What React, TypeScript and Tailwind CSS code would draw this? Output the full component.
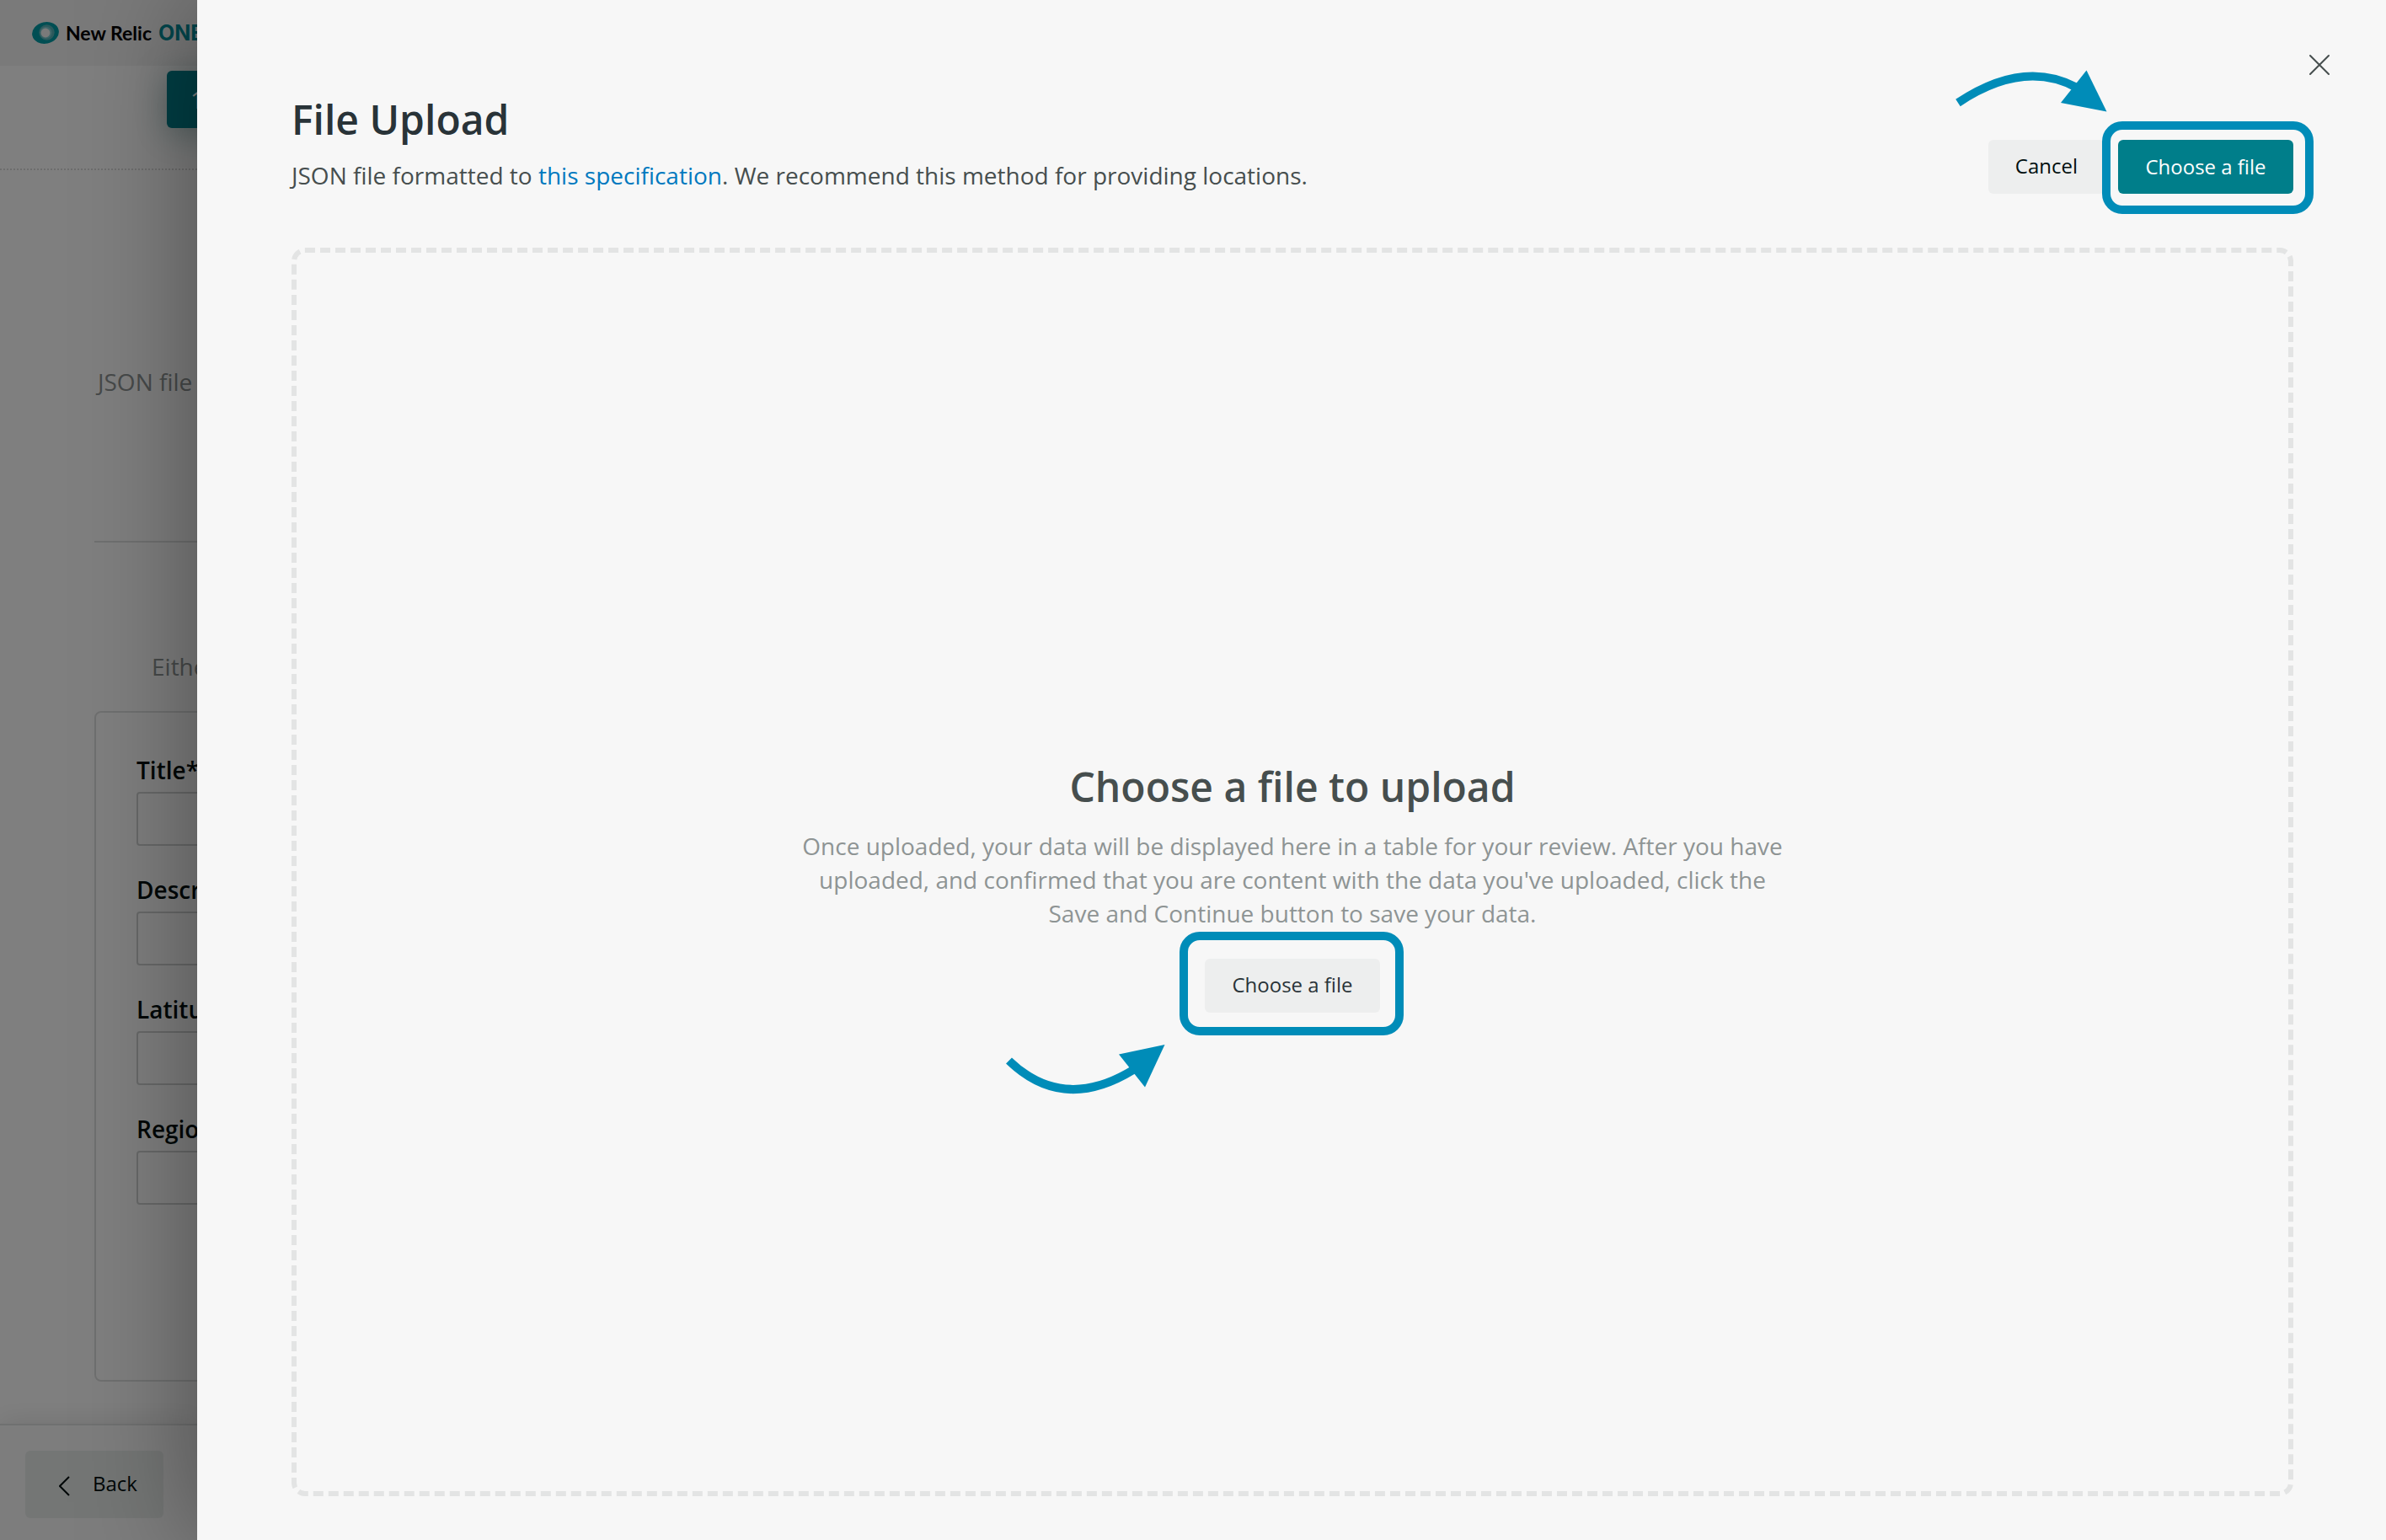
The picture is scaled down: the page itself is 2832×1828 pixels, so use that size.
import type { ReactNode } from "react";

const fields = ["Title*", "Description", "Latitude", "Region"];

function Logo() {
  return (
    <svg className="h-8 w-8 shrink-0" viewBox="0 0 32 32" aria-hidden="true">
      <ellipse cx="16" cy="16" rx="16" ry="12.7" fill="#009ca6" transform="rotate(-12 16 16)" />
      <circle cx="17.500" cy="15.500" r="9.2" fill="#58b3b9" />
      <circle cx="16.500" cy="15.800" r="7" fill="#7fcdd2" />
      <circle cx="16" cy="16" r="5.400" fill="#f4f5f5" />
    </svg>
  );
}

function BackgroundPage() {
  return (
    <div className="relative flex w-[234px] shrink-0 flex-col overflow-hidden bg-white whitespace-nowrap">
      <header className="flex h-[78px] shrink-0 items-center gap-2 bg-[#f4f4f4] pl-[38px]">
        <Logo />
        <span className="font-['Lato'] text-[23px] leading-8 font-bold text-black">New Relic</span>
        <span className="font-['Inter'] text-[25px] leading-8 font-bold text-[#008c99]">ONE</span>
      </header>
      <div className="flex h-[124px] shrink-0 items-start border-b-2 border-dotted border-[#dadada] pt-[6px] pl-[198px]">
        <button className="h-[68px] w-80 shrink-0 rounded-md bg-[#007e8a] px-7 text-left text-[28px] text-white shadow-[0_8px_40px_rgba(0,80,80,0.35)]">
          1
        </button>
      </div>
      <main className="flex flex-1 flex-col pt-[231px] pb-[50px] pl-28 text-[28px] leading-10">
        <p className="pl-1 text-[#8e9494]">JSON file</p>
        <hr className="mt-[169px] border-t-2 border-[#dfe0e0]" />
        <p className="mt-[127px] pl-17 text-[#8e9494]">Either</p>
        <form className="mt-[33px] flex w-96 flex-1 flex-col gap-[30px] rounded-lg border-2 border-[#dfe0e0] px-12 pt-12">
          {fields.map((field) => (
            <label key={field} className="flex flex-col gap-[6px] font-semibold text-[#000e0e]">
              {field}
              <input type="text" className="mb-0.5 h-16 rounded border-2 border-[#d0d2d2] bg-transparent px-4 font-normal" />
            </label>
          ))}
        </form>
      </main>
      <footer className="flex h-[138px] shrink-0 items-start border-t-2 border-[#dfe0e0] bg-[#fbfbfb] pt-[30px] pl-[30px] shadow-[0_0_32px_rgba(0,0,0,0.12)]">
        <button className="flex h-20 w-41 items-center gap-[26px] rounded-md bg-[#e8eceb] pb-0.5 pl-10 text-[24px] leading-8 text-[#000e0e]">
          <svg className="mt-1.5 h-6 w-3.5" viewBox="0 0 14 24" fill="none" stroke="currentColor" strokeWidth="2" aria-hidden="true">
            <path d="M12 1 1 12l11 11" />
          </svg>
          Back
        </button>
      </footer>
      <div className="absolute inset-0 bg-black/50" />
    </div>
  );
}

function Highlight({ children, className }: { children: ReactNode; className: string }) {
  return (
    <div className="relative">
      {children}
      <div className={`pointer-events-none absolute rounded-3xl border-10 border-[#008cb8] ${className}`} />
    </div>
  );
}

export default function App() {
  return (
    <div className="flex min-h-screen overflow-hidden font-['Open_Sans',sans-serif]">
      <BackgroundPage />
      <section
        role="dialog"
        aria-labelledby="panel-title"
        className="relative z-10 flex min-w-0 flex-1 flex-col bg-[#f7f7f7] pt-[110px] pr-[110px] pb-[52px] pl-28 shadow-[0_0_128px_rgba(0,0,0,0.4)]"
      >
        <button aria-label="Close" className="absolute top-16 right-[66px] text-[#464e4e]">
          <svg className="size-[26px]" viewBox="0 0 26 26" fill="none" stroke="currentColor" strokeWidth="2" strokeLinecap="round" aria-hidden="true">
            <path d="M2 2l22 22M24 2 2 24" />
          </svg>
        </button>
        <header className="mb-16 flex items-end justify-between">
          <div className="flex flex-col gap-[14px] pb-0.5">
            <h1 id="panel-title" className="text-[48px] leading-16 font-semibold text-[#293338]">
              File Upload
            </h1>
            <p className="text-[28px] leading-10 text-[#464e4e]">
              JSON file formatted to{" "}
              <a href="#specification" className="text-[#0079bf]">
                this specification
              </a>
              . We recommend this method for providing locations.
            </p>
          </div>
          <div className="flex gap-4">
            <button className="h-16 rounded-md bg-[#edeeee] px-8 pb-0.5 text-[24px] text-[#000e0e]">Cancel</button>
            <Highlight className="-top-[22px] -right-6 -bottom-6 -left-[19px]">
              <button className="h-16 w-52 rounded-md bg-[#007e8a] text-[24px] text-white">Choose a file</button>
              <svg
                className="pointer-events-none absolute -top-[86px] -left-[196px] h-[56px] w-[184px] text-[#008cb8]"
                viewBox="2318 80 184 56"
                aria-hidden="true"
              >
                <path d="M2324 122Q2402 70 2465 104" fill="none" stroke="currentColor" strokeWidth="10" />
                <path d="M2476.500 83.500 2500.500 132.500 2446 122z" fill="currentColor" />
              </svg>
            </Highlight>
          </div>
        </header>
        <div className="flex flex-1 flex-col items-center justify-center rounded-2xl border-6 border-dashed border-[#e3e4e4] pt-[34px]">
          <h2 className="text-[48px] leading-16 font-semibold text-[#464e4e]">Choose a file to upload</h2>
          <p className="mt-[18px] mb-[34px] max-w-[1180px] text-center text-[28px] leading-10 text-[#8e9494]">
            Once uploaded, your data will be displayed here in a table for your review. After you have uploaded, and
            confirmed that you are content with the data you've uploaded, click the Save and Continue button to save
            your data.
          </p>
          <Highlight className="-top-8 -right-7 -bottom-[27px] -left-[30px]">
            <button className="h-16 w-52 rounded-md bg-[#edeeee] pb-0.5 text-[24px] text-[#293338]">Choose a file</button>
            <svg
              className="pointer-events-none absolute top-[100px] -left-[238px] h-[64px] w-[192px] text-[#008cb8]"
              viewBox="1192 1238 192 64"
              aria-hidden="true"
            >
              <path d="M1197.500 1259Q1262 1321 1345 1270" fill="none" stroke="currentColor" strokeWidth="10" />
              <path d="M1382.500 1240 1359 1290.500 1328 1251.500z" fill="currentColor" />
            </svg>
          </Highlight>
        </div>
      </section>
    </div>
  );
}
